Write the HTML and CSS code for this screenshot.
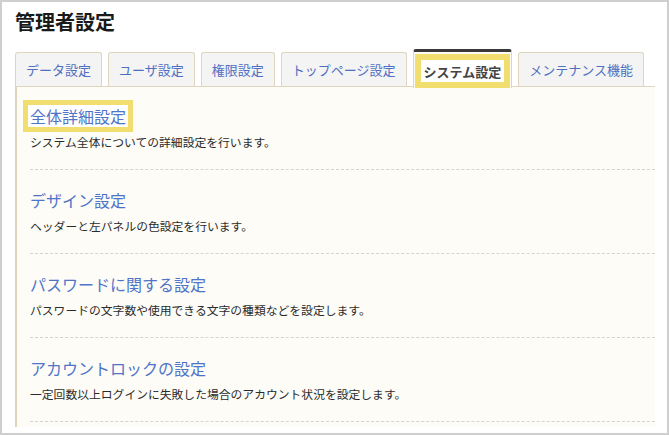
FILE: index.html
```html
<!DOCTYPE html>
<html lang="ja">
<head>
    <meta charset="UTF-8">
    <title>管理者設定</title>
    <link rel="stylesheet" href="styles.css">
</head>
<body>
    <div class="frame">
        <h1>管理者設定</h1>
        <ul class="tabs">
            <li class="tab"><a href="#">データ設定</a></li>
            <li class="tab"><a href="#">ユーザ設定</a></li>
            <li class="tab"><a href="#">権限設定</a></li>
            <li class="tab"><a href="#">トップページ設定</a></li>
            <li class="tab active"><span class="mark">システム設定</span></li>
            <li class="tab"><a href="#">メンテナンス機能</a></li>
        </ul>
        <div class="panel">
            <div class="item">
                <a href="#" class="item-title"><span class="mark">全体詳細設定</span></a>
                <p>システム全体についての詳細設定を行います。</p>
            </div>
            <div class="item">
                <a href="#" class="item-title">デザイン設定</a>
                <p>ヘッダーと左パネルの色設定を行います。</p>
            </div>
            <div class="item">
                <a href="#" class="item-title">パスワードに関する設定</a>
                <p>パスワードの文字数や使用できる文字の種類などを設定します。</p>
            </div>
            <div class="item">
                <a href="#" class="item-title">アカウントロックの設定</a>
                <p>一定回数以上ログインに失敗した場合のアカウント状況を設定します。</p>
            </div>
        </div>
    </div>
</body>
</html>
```

FILE: styles.css
```css
body {
    margin: 0;
    font-family: "Noto Sans CJK JP", "Noto Sans", sans-serif;
    background: #ffffff;
}

.frame {
    width: 669px;
    height: 435px;
    box-sizing: border-box;
    border: 2px solid #cfcfcf;
    padding: 8px 12px 0 13px;
    overflow: hidden;
}

h1 {
    margin: 0;
    font-size: 20px;
    line-height: 24px;
    font-weight: bold;
    color: #1a1a1a;
}

.tabs {
    list-style: none;
    margin: 16px 0 0;
    padding: 0;
    display: flex;
    gap: 6px;
    border-bottom: 1px solid #ddd5bd;
    height: 36px;
    width: 640px;
}

.tab {
    height: 34px;
    margin-top: 2px;
    box-sizing: border-box;
    padding: 0 10px;
    background: #f4f4f4;
    border: 1px solid #ddd5bd;
    border-bottom: none;
    border-radius: 3px 3px 0 0;
    display: flex;
    align-items: center;
    font-size: 13px;
}

.tab a {
    color: #4f6fc2;
    text-decoration: none;
}

.tab.active {
    height: 39px;
    margin-top: -1px;
    padding: 2px 1px 0;
    background: #fdfcf7;
    border-top: 3px solid #3a3a3a;
    align-items: stretch;
}

.tab.active .mark {
    display: flex;
    align-items: center;
    padding: 0 3px;
    border: 6px solid #f2de6e;
    background: #ffffff;
    color: #444;
    font-weight: bold;
    height: 34px;
    box-sizing: border-box;
}

.panel {
    width: 640px;
    height: 340px;
    background: #fdfcf7;
    border-left: 2px solid #ddd5bd;
    box-sizing: border-box;
    padding: 12px 0 0 13px;
}

.item {
    height: 70px;
    border-bottom: 1px dashed #d4d4d0;
    margin-bottom: 13px;
}

.item-title {
    display: inline-block;
    font-size: 16px;
    line-height: 22px;
    color: #4f74c8;
    text-decoration: none;
    margin-top: 6px;
}

.item-title .mark {
    display: inline-block;
    margin: -5px -7px;
    padding: 0 2px;
    border: 5px solid #f2de6e;
    background: #ffffff;
}

.item p {
    margin: 6px 0 0;
    font-size: 11.8px;
    line-height: 16px;
    color: #2b2b2b;
}
```
